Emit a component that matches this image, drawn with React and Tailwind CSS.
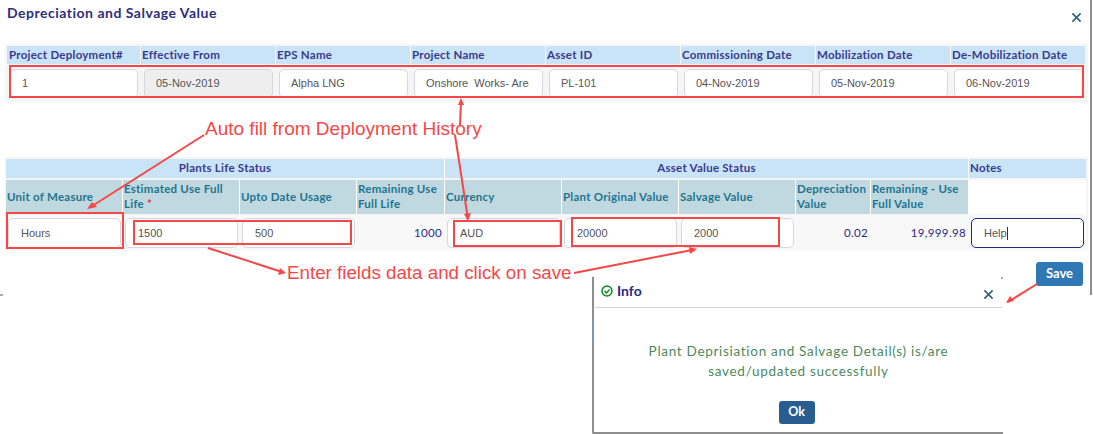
const lato = "font-['Lato','Noto_Sans',sans-serif]";
const arial = "font-['Liberation_Sans',Arial,sans-serif]";

const topCols = [
  ["Project Deployment#", "1"],
  ["Effective From", "05-Nov-2019", true],
  ["EPS Name", "Alpha LNG"],
  ["Project Name", "Onshore  Works- Area"],
  ["Asset ID", "PL-101"],
  ["Commissioning Date", "04-Nov-2019"],
  ["Mobilization Date", "05-Nov-2019"],
  ["De-Mobilization Date", "06-Nov-2019"],
];

function Field({ value, disabled, focus, pad = "pl-[12px]", height = "h-[30px]" }) {
  const tone = disabled
    ? "bg-[#eeeeee] border-[#d5d8e0]"
    : focus
      ? "bg-white border-[#1c2a78]"
      : "bg-white border-[#d5d8e4]";
  return (
    <div className={`rounded-[5px] border flex items-center text-[11px] text-[#555] ${arial} ${height} ${pad} ${tone}`}>
      <span className="block flex-1 min-w-0 overflow-hidden whitespace-pre">{value}</span>
    </div>
  );
}

function X({ className }) {
  return (
    <svg viewBox="0 0 12 12" className={className} fill="none" stroke="#2f5f80" strokeWidth="1.7">
      <path d="M1.5 1.5 10.5 10.5M10.5 1.5 1.5 10.5" />
    </svg>
  );
}

function SubHead({ children }) {
  return (
    <div className="bg-[#c0d8df] text-[#1f7590] font-bold text-[11.5px] tracking-[0.25px] leading-[15px] flex items-center px-px pb-[2px] h-[34px]">
      <span>{children}</span>
    </div>
  );
}

function Cell({ children }) {
  return <div className="h-[35px] bg-[#f8f8f8] px-[2px] pt-[3px]">{children}</div>;
}

function Num({ children }) {
  return (
    <div className="h-[35px] bg-[#f8f8f8] pr-[3px] flex items-center justify-end text-[11.5px] tracking-[0.35px] text-[#2a2a7f]">
      {children}
    </div>
  );
}

function Annotations() {
  const c = "#f44848";
  const line = (d, k) => <path key={k} d={d} stroke={c} strokeWidth="2" fill="none" />;
  const head = (d, k) => <path key={k} d={d} fill={c} />;
  return (
    <svg className="absolute inset-0 pointer-events-none" width="1093" height="434">
      <g fill="none" stroke={c} strokeWidth="2">
        <rect x="10" y="66" width="1073" height="31" />
        <rect x="7" y="213" width="116" height="35" />
        <rect x="134" y="221" width="217" height="23" />
        <rect x="454" y="221" width="107" height="25" />
        <rect x="572" y="218" width="207" height="28" />
      </g>
      {line("M204 135 89 208", 1)}
      {head("M87 209 92 202 97 207Z", 2)}
      {line("M460 125 461 101", 3)}
      {head("M461 98 464 105 458 105Z", 4)}
      {line("M455 135 468 219", 5)}
      {head("M468 221 464 214 471 213Z", 6)}
      {line("M208 248 282 272", 7)}
      {head("M286 273 278 275 280 268Z", 8)}
      {line("M574 273 692 250", 9)}
      {head("M697 249 690 254 689 247Z", 10)}
      {line("M1037 284 1008 302", 11)}
      {head("M1006 303 1010 296 1014 301Z", 12)}
    </svg>
  );
}

export default function App() {
  return (
    <div className={`relative w-[1093px] h-[434px] overflow-hidden bg-white ${lato}`}>
      <div className="w-[1092px] h-[295px] border-r-2 border-[#8f8f8f] pl-[5px] pr-[3px] pt-[5px] flex flex-col">
        <div className="flex items-start justify-between h-[39px]">
          <h1 className="pl-[2px] text-[14px] leading-[16px] font-bold tracking-[0.5px] text-[#2e2e7c]">
            Depreciation and Salvage Value
          </h1>
          <X className="w-[11px] h-[11px] mt-[7px] mr-[5px]" />
        </div>

        <div className="bg-[#f5f5f5] pl-[2px] pr-[1px] pt-[2px] w-[1083px] h-[58px]">
          <div className="grid grid-cols-[134px_repeat(7,135px)]">
            {topCols.map(([h]) => (
              <div key={h} className="h-[18px] bg-[#c9e4f7] border-r border-[#f5f5f5] pl-[1px] first:pl-[2px] flex items-center text-[11.5px] font-bold tracking-[0.25px] text-[#3a3a8c] whitespace-nowrap">
                {h}
              </div>
            ))}
            {topCols.map(([h, v, dis]) => (
              <div key={h} className="px-[3px] pt-[5px]">
                <Field value={v} disabled={dis} height="h-[29px]" pad="pl-[11px] pr-[13px]" />
              </div>
            ))}
          </div>
        </div>

        <div className="h-[55px]" />

        <div className="bg-[#f5f5f5] pl-[1px] pt-[2px] w-[1083px]">
          <div className="grid grid-cols-[117px_117px_117px_88px_117px_117px_117px_75px_98px_117px]">
            <div className="col-span-4 h-[19px] pb-[1px] bg-[#c9e4f7] border-r border-white flex items-center justify-center text-[11.5px] font-bold tracking-[0.25px] text-[#3a3a8c]">
              Plants Life Status
            </div>
            <div className="col-span-5 h-[19px] pb-[1px] bg-[#c9e4f7] border-r border-white flex items-center justify-center text-[11.5px] font-bold tracking-[0.25px] text-[#3a3a8c]">
              Asset Value Status
            </div>
            <div className="h-[19px] pb-[1px] bg-[#c9e4f7] pl-[1px] flex items-center text-[11.5px] font-bold tracking-[0.25px] text-[#3a3a8c]">
              Notes
            </div>
            <div className="col-span-full h-[2px]" />
            <div className="border-r border-white"><SubHead>Unit of Measure</SubHead></div>
            <div className="border-r border-white">
              <SubHead>Estimated Use Full Life <span className="text-[#e0384a]">*</span></SubHead>
            </div>
            <div className="border-r border-white"><SubHead>Upto Date Usage</SubHead></div>
            <div className="border-r border-white"><SubHead>Remaining Use Full Life</SubHead></div>
            <div className="border-r border-white"><SubHead>Currency</SubHead></div>
            <div className="border-r border-white"><SubHead>Plant Original Value</SubHead></div>
            <div className="border-r border-white"><SubHead>Salvage Value</SubHead></div>
            <div className="border-r border-white"><SubHead><span className="whitespace-nowrap">Depreciation</span> Value</SubHead></div>
            <div className="border-r border-white"><SubHead>Remaining - Use Full Value</SubHead></div>
            <div className="bg-white h-[34px]" />
            <div className="col-span-full h-px" />
            <Cell><Field value="Hours" /></Cell>
            <Cell><Field value="1500" /></Cell>
            <Cell><Field value="500" /></Cell>
            <Num>1000</Num>
            <Cell><Field value="AUD" /></Cell>
            <Cell><Field value="20000" /></Cell>
            <Cell><Field value="2000" /></Cell>
            <Num>0.02</Num>
            <Num>19,999.98</Num>
            <Cell>
              <Field focus value={<>Help<span className="inline-block w-px h-[13px] bg-[#333] align-middle" /></>} />
            </Cell>
          </div>
        </div>

        <div className="flex justify-end pr-[4px] pt-[12px]">
          <button className="w-[47px] h-[24px] rounded-[3px] bg-[#2f78b5] text-white text-[13px] font-bold">
            Save
          </button>
        </div>
      </div>

      <div className="absolute left-0 top-[294px] w-[3px] h-[2px] bg-[#aaaaaa]" />

      <div className="absolute left-[592px] top-[277px] w-[411px] h-[157px] bg-white border-l-2 border-b-2 border-[#8e8e8e] rounded-bl-[2px] flex flex-col">
        <div className="absolute -left-[2px] top-[43px] w-[2px] h-[25px] bg-[#7f97a8]" />
        <div className="absolute right-0 top-0 w-[2px] h-[2px] bg-[#aaaaaa]" />
        <div className="h-[31px] mx-[1px] border-b border-[#d4d4d4] flex items-center justify-between pl-[6px] pr-[7px]">
          <div className="flex items-center gap-[4px] text-[14px] font-bold text-[#2a2a7c] -mt-[3px]">
            <svg viewBox="0 0 12 12" className="w-[12px] h-[12px]" fill="none" stroke="#0f8a1f" strokeWidth="1.5">
              <circle cx="6" cy="6" r="5" />
              <path d="M3.5 6 5.4 7.9 8.6 4.4" />
            </svg>
            Info
          </div>
          <X className="w-[11px] h-[11px] mt-[5px] mr-[1px]" />
        </div>
        <div className="pt-[33px] text-center text-[13.5px] leading-[20px] tracking-[0.7px] text-[#4c8a5c]">
          <p>Plant Deprisiation and Salvage Detail(s) is/are</p>
          <p>saved/updated successfully</p>
        </div>
        <div className="flex justify-center pr-[4px] pt-[20px]">
          <button className="w-[36px] h-[23px] rounded-[3px] bg-[#2a5d8f] text-white text-[12.5px] font-bold">Ok</button>
        </div>
      </div>

      <Annotations />

      <div className={`absolute left-[205px] top-[117px] text-[19px] leading-[24px] whitespace-nowrap text-[#f44848] ${arial}`}>
        Auto fill from Deployment History
      </div>
      <div className={`absolute left-[287px] top-[261px] text-[18.75px] leading-[24px] whitespace-nowrap text-[#f44848] ${arial}`}>
        Enter fields data and click on save
      </div>
    </div>
  );
}
